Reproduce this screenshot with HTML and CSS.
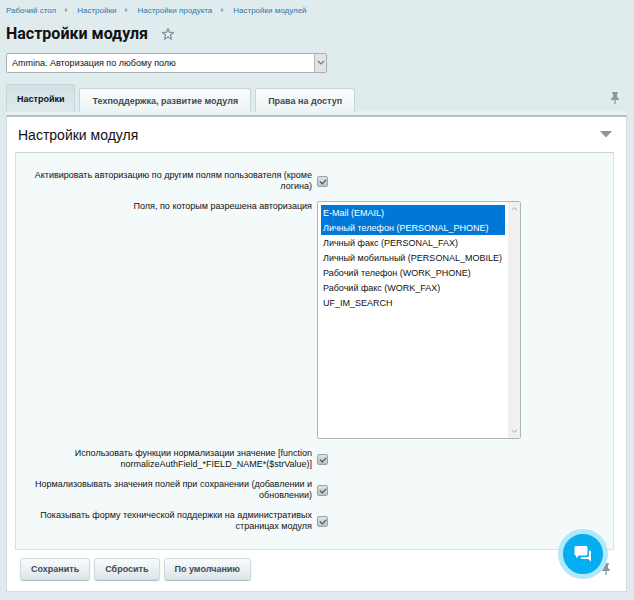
FILE: index.html
```html
<!DOCTYPE html>
<html lang="ru">
<head>
<meta charset="utf-8">
<title>Настройки модуля</title>
<link rel="stylesheet" href="styles.css">
</head>
<body>
<nav class="crumbs">
  <a href="#">Рабочий стол</a><span class="crumb-arrow"></span>
  <a href="#">Настройки</a><span class="crumb-arrow"></span>
  <a href="#">Настройки продукта</a><span class="crumb-arrow"></span>
  <a href="#">Настройки модулей</a>
</nav>
<header class="page-head">
  <h1>Настройки модуля</h1>
  <button class="icon-button" type="button" aria-label="В избранное">
    <svg width="12" height="12" viewBox="0 0 12 12"><path d="M6 .8 7.5 4.3 11.3 4.6 8.4 7.1 9.3 11 6 8.9 2.7 11 3.6 7.1 .7 4.6 4.5 4.3Z" fill="#eef4f6" stroke="#8798a5" stroke-width="1.4"/></svg>
  </button>
</header>
<div class="module-picker">
  <select class="module-select" aria-label="Модуль">
    <option>Ammina. Авторизация по любому полю</option>
  </select>
  <span class="module-arrow"><svg width="8" height="6" viewBox="0 0 8 6"><path d="M1 1 4 4 7 1" fill="none" stroke="#777" stroke-width="1.2"/></svg></span>
</div>
<div class="tabs">
  <button class="tab tab-active" type="button">Настройки</button>
  <button class="tab" type="button">Техподдержка, развитие модуля</button>
  <button class="tab" type="button">Права на доступ</button>
  <button class="icon-button tabs-pin" type="button" aria-label="Закрепить вкладки">
    <svg width="8" height="12" viewBox="0 0 8 12"><path d="M1 0H7V1.5H6V5L8 7V8H4.6V12H3.4V8H0V7L2 5V1.5H1Z" fill="#8b979d"/></svg>
  </button>
</div>
<main class="panel">
  <div class="panel-head">
    <h2>Настройки модуля</h2>
    <button class="icon-button" type="button" aria-label="Свернуть">
      <svg width="12" height="7" viewBox="0 0 12 7"><path d="M0 0H12L6 6.5Z" fill="#89979c"/></svg>
    </button>
  </div>
  <form class="form">
    <label for="activate">Активировать авторизацию по другим полям пользователя (кроме логина)</label>
    <div class="field"><input id="activate" type="checkbox" checked></div>
    <label class="label-top" for="fields">Поля, по которым разрешена авторизация</label>
    <div class="field">
      <div class="listbox">
        <select id="fields" multiple size="15">
          <option class="chosen">E-Mail (EMAIL)</option>
          <option class="chosen">Личный телефон (PERSONAL_PHONE)</option>
          <option>Личный факс (PERSONAL_FAX)</option>
          <option>Личный мобильный (PERSONAL_MOBILE)</option>
          <option>Рабочий телефон (WORK_PHONE)</option>
          <option>Рабочий факс (WORK_FAX)</option>
          <option>UF_IM_SEARCH</option>
        </select>
        <span class="scroll-track">
          <svg width="7" height="5" viewBox="0 0 7 5"><path d="M1 4 3.5 1.5 6 4" fill="none" stroke="#a6a6a6"/></svg>
          <svg width="7" height="5" viewBox="0 0 7 5"><path d="M1 1 3.5 3.5 6 1" fill="none" stroke="#a6a6a6"/></svg>
        </span>
      </div>
    </div>
    <label for="normalize">Использовать функции нормализации значение [function normalizeAuthField_*FIELD_NAME*($strValue)]</label>
    <div class="field"><input id="normalize" type="checkbox" checked></div>
    <label for="onsave">Нормализовывать значения полей при сохранении (добавлении и обновлении)</label>
    <div class="field"><input id="onsave" type="checkbox" checked></div>
    <label for="support">Показывать форму технической поддержки на административых страницах модуля</label>
    <div class="field"><input id="support" type="checkbox" checked></div>
  </form>
  <div class="actions">
    <button class="btn" type="button">Сохранить</button>
    <button class="btn" type="button">Сбросить</button>
    <button class="btn" type="button">По умолчанию</button>
    <button class="icon-button actions-pin" type="button" aria-label="Закрепить кнопки">
      <svg width="8" height="12" viewBox="0 0 8 12"><path d="M1 0H7V1.5H6V5L8 7V8H4.6V12H3.4V8H0V7L2 5V1.5H1Z" fill="#8b979d"/></svg>
    </button>
  </div>
</main>
<button class="chat" type="button" aria-label="Чат">
  <svg width="18" height="17" viewBox="0 0 18 17"><path d="M2 0H12Q13.5 0 13.5 1.5V8Q13.5 9.5 12 9.5H5L2.2 12.3V9.5Q.5 9.5 .5 8V1.500Q.5 0 2 0Z" fill="#fff"/><path d="M15 4.500H15.800Q17 4.500 17 6V15.500L14.200 13H8Q6.500 13 6.500 11.200H13Q15 11.200 15 9Z" fill="#fff"/></svg>
</button>
</body>
</html>
```
FILE: styles.css
```css
* {
  box-sizing: border-box;
}

body {
  margin: 0;
  padding: 4px 7px 9px 6px;
  background: #e0ebed;
  color: #111;
  font-family: "Liberation Sans", Arial, sans-serif;
  font-size: 9px;
  line-height: 11px;
}

button,
select {
  font-family: inherit;
}

.crumbs {
  display: flex;
  align-items: center;
  height: 12px;
  font-size: 8px;
}

.crumbs a {
  color: #2f76b0;
  text-decoration: none;
}

.crumb-arrow {
  margin: 0 9px;
  border-left: 3px solid #8fa0a8;
  border-top: 2px solid transparent;
  border-bottom: 2px solid transparent;
}

.page-head {
  display: flex;
  align-items: center;
  gap: 14px;
  height: 36px;
}

h1 {
  margin: 0;
  font-family: Roboto, sans-serif;
  font-size: 16px;
  line-height: 20px;
}

.icon-button {
  display: flex;
  padding: 0;
  border: 0;
  background: none;
}

.module-picker {
  display: flex;
  width: 321px;
  height: 20px;
  margin-top: 1px;
  border: 1px solid #a9b0b3;
  border-radius: 2px;
  background: #fff;
}

.module-select {
  flex: 1;
  padding: 0 5px;
  border: 0;
  background: none;
  color: #111;
  font-size: 9px;
  appearance: none;
}

.module-arrow {
  display: flex;
  align-items: center;
  justify-content: center;
  width: 12px;
  border-left: 1px solid #b4b4b4;
  background: #e3e3e3;
}

.tabs {
  display: flex;
  align-items: flex-end;
  gap: 4px;
  height: 39px;
}

.tab {
  height: 24px;
  padding: 0 12px;
  border: 1px solid #c8d5d9;
  border-bottom: 0;
  border-radius: 3px 3px 0 0;
  background: linear-gradient(#fbfdfd, #edf3f5);
  color: #3f4b54;
  font-size: 9px;
  font-weight: bold;
}

.tab-active {
  height: 28px;
  padding: 0 10px;
  background: linear-gradient(#d3dfe2, #e0eaed);
  color: #111;
}

.tabs-pin {
  margin: 0 8px 8px auto;
}

.panel {
  border: 1px solid #cfdde0;
  border-top: 2px solid #b5c2c7;
  background: #fff;
  box-shadow: 0 -4px 0 #e9f0f2;
  margin-top: 3px;
}

.panel-head {
  display: flex;
  align-items: center;
  justify-content: space-between;
  height: 35px;
  padding: 0 14px 0 11px;
}

h2 {
  margin: 0;
  font-size: 14px;
  font-weight: normal;
  line-height: 18px;
}

.form {
  display: grid;
  grid-template-columns: 1fr 1fr;
  column-gap: 5px;
  row-gap: 9px;
  align-items: center;
  margin: 0 12px 0 8px;
  padding: 17px 0;
  border: 1px solid #d5e4e7;
  border-top-color: #c6d6da;
  background: #f4f9fa;
}

.form label {
  padding-left: 15px;
  text-align: right;
}

.form .label-top {
  align-self: start;
}

.field {
  display: flex;
}

.field input {
  width: 11px;
  height: 11px;
  margin: 0;
  border: 1px solid #9aa5aa;
  border-radius: 2px;
  background: linear-gradient(#dde4e6, #b9c3c7);
  appearance: none;
}

.field input:checked::before {
  display: block;
  width: 3px;
  height: 5px;
  margin: 1px 0 0 3px;
  border: solid #3f4a50;
  border-width: 0 1px 1px 0;
  content: "";
  transform: rotate(45deg);
}

.listbox {
  display: flex;
  width: 204px;
  height: 238px;
  border: 1px solid #aeb7ba;
  border-radius: 2px;
  background: #fff;
}

.listbox select {
  flex: 1;
  min-width: 0;
  height: 100%;
  padding: 3px;
  border: 0;
  outline: 0;
  background: none;
  color: #111;
  font-size: 9px;
  scrollbar-width: none;
}

.listbox option {
  min-height: 15px;
  padding: 3px 2px 2px;
  line-height: 10px;
}

.listbox .chosen {
  background: #0078d7;
  color: #fff;
}

.scroll-track {
  display: flex;
  flex-direction: column;
  align-items: center;
  justify-content: space-between;
  width: 12px;
  padding: 4px 0;
  background: #f0f0f0;
}

.actions {
  display: flex;
  align-items: center;
  gap: 4px;
  padding: 8px 16px 11px 13px;
}

.btn {
  height: 22px;
  padding: 0 10px;
  border: 1px solid #cfdade;
  border-radius: 3px;
  background: linear-gradient(#fafcfd, #dbe6ea);
  box-shadow: 0 1px 1px #b0bcc1;
  color: #3f4b54;
  font-size: 9px;
  font-weight: bold;
}

.actions-pin {
  margin-left: auto;
}

.chat {
  position: fixed;
  right: 26px;
  bottom: 21px;
  display: flex;
  align-items: center;
  justify-content: center;
  width: 50px;
  height: 50px;
  padding: 0;
  border: 5px solid #b3e8fa;
  border-radius: 50%;
  background: #05aef0;
}
```
